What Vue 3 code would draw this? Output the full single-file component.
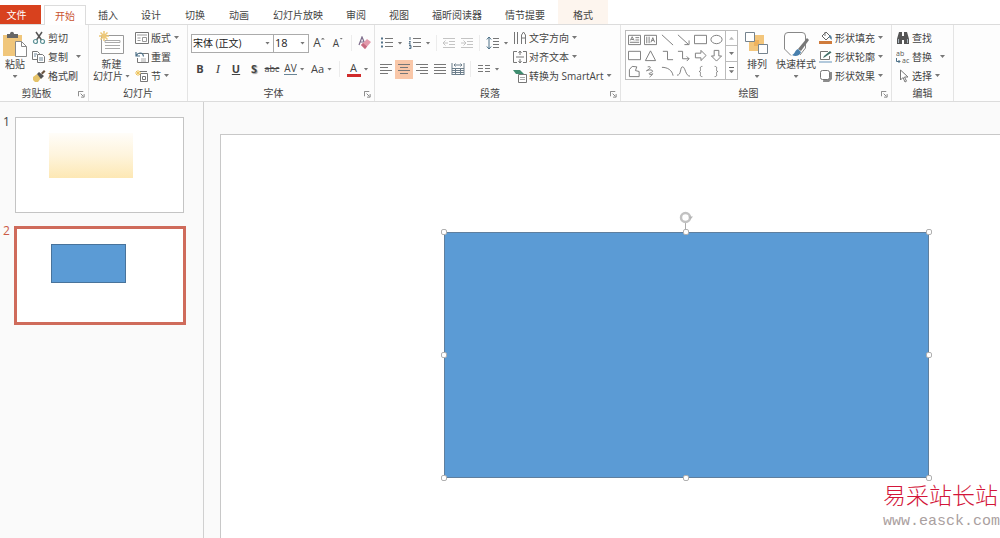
<script setup>
import { ref } from 'vue'

const tabs = ['插入', '设计', '切换', '动画', '幻灯片放映', '审阅', '视图', '福昕阅读器', '情节提要']
const font = ref('宋体 (正文)')
const size = ref('18')

const k = 'fill="none" stroke="#777" stroke-width="1"'
const lines = (rows) => rows.map(([a, b], i) => `<path d="M${a} ${2.5 + i * 3}H${b}" ${k}/>`).join('')

const icons = {
  cut: `<path d="M4 1L9.500 9M10 1L4.500 9" fill="none" stroke="#555" stroke-width="1.500"/><circle cx="3.500" cy="10.500" r="2" fill="none" stroke="#5d9296" stroke-width="1.200"/><circle cx="10.500" cy="10.500" r="2" fill="none" stroke="#5d9296" stroke-width="1.200"/>`,
  copy: `<path d="M.5 1.500h5l2 2v6h-7z" fill="#fff" stroke="#777"/><path d="M5.500 4.500h5l2 2v6h-7z" fill="#fff" stroke="#777"/><path d="M2 4h3M2 6h2M7 8h4M7 10h4" stroke="#6d8799"/>`,
  brush: `<path d="M1 8l4-3 4 4-3 4H3l-2-2z" fill="#e5c36a"/><path d="M5 5l2-2 5 4-3 3z" fill="#555"/><path d="M9 4l3-3 1.500 1.500-3 3z" fill="#6b5540"/>`,
  layout: `<path d="M.5 1.500h13v11H.5z" fill="#fff" stroke="#777"/><path d="M2 4h10M2.500 7h3M2.500 9.500h3M7.500 6.500h4v4h-4z" fill="none" stroke="#999"/>`,
  reset: `<path d="M3.500 3.500h10v9h-11V8" fill="#fff" stroke="#777"/><path d="M1 2v4h4M1.500 5.500C3 2 8 2 8.500 6.500" fill="none" stroke="#4d7188" stroke-width="1.200"/><path d="M6 9h5M6 11h5" fill="none" stroke="#aaa"/>`,
  section: `<path d="M5.500 4.500h7v8h-7zM4 2.500h8" fill="#fff" stroke="#777"/><path d="M7.500 7.500h3v3h-3z" ${k}/><path d="M3 1v6M0 4h6M1 2l4 4M5 2L1 6" stroke="#edc35c"/>`,
  bullets: `<path d="M5 2.500h8M5 6.500h8M5 10.500h8" ${k}/><path d="M1 1.500h2v2H1zM1 5.500h2v2H1zM1 9.500h2v2H1z" fill="#54738a"/>`,
  numbers: `<path d="M5 2.500h8M5 6.500h8M5 10.500h8" ${k}/><path d="M2 1v3M1 5.500h1.500L1 8h2M1 9.500h2v3H1M1.500 11H3" fill="none" stroke="#54738a"/>`,
  outdent: `<path d="M1 2.500h12M7 5.500h6M7 8.500h6M1 11.500h12M6 7H1M3.500 4.500L1 7l2.500 2.500" fill="none" stroke="#c4c4c4"/>`,
  indent: `<path d="M1 2.500h12M7 5.500h6M7 8.500h6M1 11.500h12M1 7h5M3.500 4.500L6 7 3.500 9.500" fill="none" stroke="#c4c4c4"/>`,
  spacing: `<path d="M7 2.500h6M7 5.500h6M7 8.500h6M7 11.500h6" ${k}/><path d="M3 1v12M.8 3.500L3 1l2.200 2.500M.8 10.500L3 13l2.200-2.500" fill="none" stroke="#4d7188"/>`,
  left: lines([[1, 13], [1, 9], [1, 13], [1, 9]]),
  center: lines([[1, 13], [3, 11], [1, 13], [3, 11]]),
  right: lines([[1, 13], [5, 13], [1, 13], [5, 13]]),
  justify: lines([[1, 13], [1, 13], [1, 13], [1, 13]]),
  spread: `<path d="M1 1v12M13 1v12M3 3h8M4.500 1.500L3 3l1.500 1.500M9.500 1.500L11 3 9.500 4.500M1 6.500h12M1 8.500h12M1 10.500h12M1 12.500h12M4.500 6v7M9.500 6v7" fill="none" stroke="#6c7e8b"/>`,
  columns: `<path d="M1 3.500h5M8 3.500h5M1 6.500h5M8 6.500h5M1 9.500h5M8 9.500h5" ${k}/>`,
  direction: `<path d="M1.500 1v12M4.500 1v12M8.500 13V4l2-3 2 3v9M8.500 7h4" ${k}/>`,
  valign: `<path d="M4 1.500H.5v11H4M10 1.500h3.500v11H10M3 7h8M7 1v4M7 13V9M5.500 3L7 1l1.500 2M5.500 11L7 13l1.500-2" ${k}/>`,
  smart: `<path d="M0 1h7l4 4-3 3-2-3H3z" fill="#3f8d70"/><path d="M5.500 5.500h8v8h-8z" fill="#fff" stroke="#777"/><path d="M7 8.500h5M7 10.500h5" fill="none" stroke="#aaa"/>`,
  fill: `<path d="M3 5l4-4 4 4-4 4z" fill="#fff" stroke="#666"/><path d="M6 1v4" ${k}/><path d="M11 4c2 1 2 3 1.500 5L10 6z" fill="#4f7d9c"/><path d="M0 10h13v3H0z" fill="#cf7b3c"/>`,
  outline: `<path d="M9 1.500H1.500v8h9V6" fill="#fff" stroke="#777"/><path d="M4 8l1-2 6-5 1.500 1.500L6 7z" fill="#3f6f68"/><path d="M0 11h13v2H0z" fill="#b2c9dc"/>`,
  effect: `<path d="M5 3h8v7l-3 3H4z" fill="#8c8c8c"/><rect x="1.500" y="1.500" width="9" height="9" rx="2" fill="#fff" stroke="#777"/>`,
  find: `<path d="M3 1h3v4h2V1h3l2 7v5H8V9H6v4H1V8z" fill="#555"/><path d="M2.500 8v4M11.500 8v4" stroke="#a9b6bf"/>`,
  select: `<path d="M4.500 1v10l2.500-2.500 2 4.500 1.500-.8-2-4.200H12z" fill="#fff" stroke="#777"/>`,
  eraser: `<path d="M1 9l3-8 3 7M2 6h4" fill="none" stroke="#7c6b8a" stroke-width="1.200"/><path d="M3 9l6-6 4 3-6 7z" fill="#e39aab"/><path d="M3 9l2-2 4 3.500L7 13z" fill="#c66b80"/>`,
  paste: `<path d="M1 4h19v21H1z" fill="#f0c67b"/><path d="M5 3h3c0-3 4-3 4 0h4v4H5z" fill="#666"/><path d="M13.500 10.500h6l5 5v10h-11z" fill="#fff" stroke="#888"/><path d="M19.500 10.500v5h5" fill="none" stroke="#888"/>`,
  newSlide: `<path d="M2.500 4.500h22v18h-22z" fill="#fff" stroke="#999"/><path d="M6 9.500h15v2H6zM6 14.500h15M6 17.500h15" fill="none" stroke="#aaa"/><path d="M5 0v10M0 5h10M1.500 1.500l7 7M8.500 1.500l-7 7" stroke="#edc878" stroke-width="1.500"/>`,
  arrange: `<path d="M11 4h9v9h-9z" fill="#f3c67c"/><path d="M5 11h9v9H5z" fill="#f3c67c"/><path d="M10 9h5v6h-5z" fill="#efb25c"/><path d="M1.500 1.500h9v9h-9zM14.500 13.500h9v9h-9z" fill="#fff" stroke="#75838e"/>`,
  quick: `<path d="M8 24.500L1.500 18V5Q1.500 1.500 5 1.500h14q3.500 0 3.500 3.500v12L17 24" fill="#fff" stroke="#888"/><path d="M24 7l2 2-8 11-3-2z" fill="#777"/><path d="M15 18l3 3c-1 4-6 5-9 3 3-1 3-5 6-6z" fill="#477fad"/>`
}

const shapes = [
  `<path d="M.5 2.500h13v10H.5zM8 5h4M8 7.500h4M2 10h10M2.500 8L4.500 4l2 4M3.500 7h2" ${k}/>`,
  `<path d="M.5 2.500h13v10H.5zM3 4v7M5.500 4v7M7.500 10L9.500 5l2 5M8.500 8h2" ${k}/>`,
  `<path d="M1 2l12 11" ${k}/>`,
  `<path d="M1 2l11 10M8 12.500h5V8" ${k}/>`,
  `<path d="M.5 2.500h13v9H.5z" ${k}/>`,
  `<ellipse cx="7" cy="7" rx="6" ry="4.500" ${k}/>`,
  `<path d="M.5 2.500h13v9H.5z" ${k}/>`,
  `<path d="M7 2l5.500 10.500h-11z" ${k}/>`,
  `<path d="M2 2.500h5v9h6" ${k}/>`,
  `<path d="M1 2.500h5v8h7M10.500 8l2.500 2.500-2.500 2.500" ${k}/>`,
  `<path d="M1.500 4.500h6v-3L13 7l-5.500 5.500v-3h-6z" ${k}/>`,
  `<path d="M4.500 1.500h5v6h3L7 13 1.500 7.500h3z" ${k}/>`,
  `<path d="M1.500 12.500V5l3-3.500 5 .5-1.500 4 4 1v5.500z" ${k}/>`,
  `<path d="M4 2c6-1 1 3-1 4s4-2 6 0-6 3-3 4 4-2 3 0-2 2-3 3" ${k}/>`,
  `<path d="M1 2.500c6 0 11 3 12 9" ${k}/>`,
  `<path d="M0 11c5 0 3-9 6-9s3 10 8 10" ${k}/>`,
  `<path d="M9 1.500c-3 0-2 2-2 3.500S6.500 7 5.500 7C6.500 7 7 7.500 7 9s-1 3.500 2 3.500" ${k}/>`,
  `<path d="M5 1.500c3 0 2 2 2 3.500S7.500 7 8.500 7C7.500 7 7 7.500 7 9s1 3.500-2 3.500" ${k}/>`
]

const paragraphRight = [
  ['direction', '文字方向'],
  ['valign', '对齐文本'],
  ['smart', '转换为 SmartArt']
]
const shapeTools = [
  ['fill', '形状填充'],
  ['outline', '形状轮廓'],
  ['effect', '形状效果']
]
const handles = ['nw', 'n', 'ne', 'w', 'e', 'sw', 's', 'se']
</script>

<template>
  <div class="app">
    <nav class="tabs">
      <button class="file">文件</button>
      <button class="tab active">开始</button>
      <button v-for="t in tabs" :key="t" class="tab">{{ t }}</button>
      <button class="tab context">格式</button>
    </nav>

    <header class="ribbon">
      <section class="group clipboard">
        <div class="body">
          <button class="big">
            <svg class="large" viewBox="0 0 26 26" v-html="icons.paste"></svg>
            <span>粘贴</span><i class="caret"></i>
          </button>
          <div class="stack">
            <button class="small"><svg viewBox="0 0 14 14" v-html="icons.cut"></svg>剪切</button>
            <button class="small"><svg viewBox="0 0 14 14" v-html="icons.copy"></svg>复制<i class="caret far"></i></button>
            <button class="small"><svg viewBox="0 0 14 14" v-html="icons.brush"></svg>格式刷</button>
          </div>
        </div>
        <footer><span>剪贴板</span><button class="launcher" aria-label="剪贴板选项"><svg viewBox="0 0 8 8"><path d="M.5 6V.5H6M3 3l3 3M7 3.500V7H3.500" fill="none" stroke="#777" /></svg></button></footer>
      </section>

      <section class="group slides">
        <div class="body">
          <button class="big">
            <svg class="large" viewBox="0 0 26 26" v-html="icons.newSlide"></svg>
            <span>新建</span><span class="line">幻灯片<i class="caret"></i></span>
          </button>
          <div class="stack">
            <button class="small"><svg viewBox="0 0 14 14" v-html="icons.layout"></svg>版式<i class="caret"></i></button>
            <button class="small"><svg viewBox="0 0 14 14" v-html="icons.reset"></svg>重置</button>
            <button class="small"><svg viewBox="0 0 14 14" v-html="icons.section"></svg>节<i class="caret"></i></button>
          </div>
        </div>
        <footer><span>幻灯片</span></footer>
      </section>

      <section class="group fonts">
        <div class="rows">
          <div class="row">
            <div class="combo family">
              <select v-model="font" aria-label="字体"><option>宋体 (正文)</option></select><i class="caret"></i>
            </div>
            <div class="combo size">
              <select v-model="size" aria-label="字号"><option>18</option></select><i class="caret"></i>
            </div>
            <button class="glyph grow" aria-label="增大字号">A<i class="caret up"></i></button>
            <button class="glyph shrink" aria-label="减小字号">A<i class="caret"></i></button>
            <i class="rule"></i>
            <button class="glyph" aria-label="清除格式"><svg viewBox="0 0 14 14" v-html="icons.eraser"></svg></button>
          </div>
          <div class="row formats">
            <button class="glyph"><b>B</b></button>
            <button class="glyph italic">I</button>
            <button class="glyph"><b><u>U</u></b></button>
            <button class="glyph shadow"><b>S</b></button>
            <button class="glyph strike"><s>abc</s></button>
            <button class="glyph drop kern"><span>AV</span><i class="caret"></i></button>
            <button class="glyph drop case">Aa<i class="caret"></i></button>
            <i class="rule"></i>
            <button class="glyph drop color"><span>A</span><i class="caret"></i></button>
          </div>
        </div>
        <footer><span>字体</span><button class="launcher" aria-label="字体选项"><svg viewBox="0 0 8 8"><path d="M.5 6V.5H6M3 3l3 3M7 3.500V7H3.500" fill="none" stroke="#777" /></svg></button></footer>
      </section>

      <section class="group paragraph">
        <div class="body">
          <div class="rows">
            <div class="row lists">
              <button class="icon drop" aria-label="项目符号"><svg viewBox="0 0 14 14" v-html="icons.bullets"></svg><i class="caret"></i></button>
              <button class="icon drop" aria-label="编号"><svg viewBox="0 0 14 14" v-html="icons.numbers"></svg><i class="caret"></i></button>
              <i class="rule"></i>
              <button class="icon" aria-label="降低列表级别"><svg viewBox="0 0 14 14" v-html="icons.outdent"></svg></button>
              <button class="icon" aria-label="提高列表级别"><svg viewBox="0 0 14 14" v-html="icons.indent"></svg></button>
              <i class="rule"></i>
              <button class="icon drop" aria-label="行距"><svg viewBox="0 0 14 14" v-html="icons.spacing"></svg><i class="caret"></i></button>
            </div>
            <div class="row aligns">
              <button class="icon" aria-label="左对齐"><svg viewBox="0 0 14 14" v-html="icons.left"></svg></button>
              <button class="icon on" aria-label="居中"><svg viewBox="0 0 14 14" v-html="icons.center"></svg></button>
              <button class="icon" aria-label="右对齐"><svg viewBox="0 0 14 14" v-html="icons.right"></svg></button>
              <button class="icon" aria-label="两端对齐"><svg viewBox="0 0 14 14" v-html="icons.justify"></svg></button>
              <button class="icon" aria-label="分散对齐"><svg viewBox="0 0 14 14" v-html="icons.spread"></svg></button>
              <i class="rule"></i>
              <button class="icon drop" aria-label="分栏"><svg viewBox="0 0 14 14" v-html="icons.columns"></svg><i class="caret"></i></button>
            </div>
          </div>
          <div class="stack">
            <button v-for="[i, t] in paragraphRight" :key="i" class="small"><svg viewBox="0 0 14 14" v-html="icons[i]"></svg>{{ t }}<i class="caret"></i></button>
          </div>
        </div>
        <footer><span>段落</span><button class="launcher" aria-label="段落选项"><svg viewBox="0 0 8 8"><path d="M.5 6V.5H6M3 3l3 3M7 3.500V7H3.500" fill="none" stroke="#777" /></svg></button></footer>
      </section>

      <section class="group drawing">
        <div class="body">
          <div class="gallery">
            <div class="shapes">
              <button v-for="(s, i) in shapes" :key="i" :aria-label="'形状 ' + (i + 1)"><svg viewBox="0 0 14 14" v-html="s"></svg></button>
            </div>
            <div class="scroll">
              <button aria-label="向上"><i class="caret up faint"></i></button>
              <button aria-label="向下"><i class="caret"></i></button>
              <button class="more" aria-label="其他"><i class="caret"></i></button>
            </div>
          </div>
          <button class="big">
            <svg class="large" viewBox="0 0 26 26" v-html="icons.arrange"></svg>
            <span>排列</span><i class="caret"></i>
          </button>
          <button class="big">
            <svg class="large" viewBox="0 0 26 26" v-html="icons.quick"></svg>
            <span>快速样式</span><i class="caret"></i>
          </button>
          <div class="stack">
            <button v-for="[i, t] in shapeTools" :key="i" class="small"><svg viewBox="0 0 14 14" v-html="icons[i]"></svg>{{ t }}<i class="caret"></i></button>
          </div>
        </div>
        <footer><span>绘图</span><button class="launcher" aria-label="绘图选项"><svg viewBox="0 0 8 8"><path d="M.5 6V.5H6M3 3l3 3M7 3.500V7H3.500" fill="none" stroke="#777" /></svg></button></footer>
      </section>

      <section class="group editing">
        <div class="body">
          <div class="stack">
            <button class="small"><svg viewBox="0 0 14 14" v-html="icons.find"></svg>查找</button>
            <button class="small">
              <svg viewBox="0 0 14 14"><path d="M.5 8v3.500H4M2.500 10L4 11.500 2.500 13" fill="none" stroke="#4d7188" /><text x="0" y="6" font-size="7" fill="#555">ab</text><text x="6" y="13" font-size="7" fill="#555">ac</text></svg>替换<i class="caret far"></i>
            </button>
            <button class="small"><svg viewBox="0 0 14 14" v-html="icons.select"></svg>选择<i class="caret"></i></button>
          </div>
        </div>
        <footer><span>编辑</span></footer>
      </section>
    </header>

    <div class="workspace">
      <aside class="thumbs">
        <button class="thumb"><span>1</span><span class="frame"><i class="shape cream"></i></span></button>
        <button class="thumb current"><span>2</span><span class="frame"><i class="shape blue"></i></span></button>
      </aside>
      <main class="stage">
        <div class="slide">
          <div class="selected">
            <svg class="rotate" viewBox="0 0 14 20"><path d="M6.500 12v8" stroke="#aaa" /><circle cx="6.500" cy="7.500" r="4.500" fill="#fff" stroke="#c2c2c2" stroke-width="2.500" /><path d="M9.500 6.500h4.500l-2.500 3z" fill="#b5b5b5" /></svg>
            <i v-for="h in handles" :key="h" class="handle" :class="h"></i>
          </div>
        </div>
      </main>
      <div class="mark"><strong>易采站长站</strong><span>www.easck.com</span></div>
    </div>
  </div>
</template>

<style>
body { margin: 0; }
</style>

<style scoped>
.app {
  display: flex;
  flex-direction: column;
  min-height: 100vh;
  background: #fff;
  color: #444;
  font: 10px/14px "Open Sans", "Noto Sans CJK SC", sans-serif;
}
.app *, .app *::before, .app *::after { box-sizing: border-box; }
button {
  padding: 0;
  border: 0;
  background: none;
  color: inherit;
  font: inherit;
  white-space: nowrap;
}
svg { display: block; flex: none; width: 14px; height: 14px; }
.caret {
  display: block;
  flex: none;
  width: 5px;
  height: 3px;
  background: #777;
  clip-path: polygon(0 0, 100% 0, 50% 100%);
}
.caret.up { clip-path: polygon(50% 0, 100% 100%, 0 100%); }
.caret.faint { background: #bbb; }
.rule { width: 1px; height: 16px; background: #ececec; }

.tabs {
  display: flex;
  height: 25px;
  padding-top: 5px;
  border-bottom: 1px solid #dcdcdc;
}
.file { width: 41px; padding-right: 8px; margin-right: 3px; background: #d8411e; color: #fff; }
.tab { padding: 0 12px 0 11px; }
.tab:nth-child(n + 5):nth-child(-n + 7) { padding-left: 12px; }
.tab.active {
  height: 20px;
  padding: 0 10px;
  margin-right: 1px;
  border: 1px solid #dcdcdc;
  border-bottom: 0;
  background: #fff;
  color: #c9532f;
}
.tab.context { height: 24px; padding: 5px 15px 0; margin: -5px 0 0 1px; background: #fdf5ee; }

.ribbon {
  display: flex;
  min-height: 77px;
  border-bottom: 1px solid #dcdcdc;
  background: #fdfdfd;
}
.group {
  display: flex;
  flex-direction: column;
  flex: none;
  padding-top: 3px;
  border-right: 1px solid #e4e4e4;
}
.clipboard { width: 89px; }
.slides { width: 99px; }
.fonts { width: 187px; }
.paragraph { width: 246px; }
.drawing { width: 271px; }
.editing { width: 62px; }
.body { display: flex; height: 57px; }
.group footer { display: flex; align-items: center; height: 16px; }
.group footer span { flex: 1; text-align: center; }
.launcher { width: 15px; }
.launcher svg { width: 7px; height: 7px; margin: 3px 0 0 5px; }

.stack { display: flex; flex-direction: column; }
.small { display: flex; align-items: center; gap: 2px; height: 19px; }
.small .caret { margin-left: 1px; }
.small .far { margin-left: 6px; }
.big { display: flex; flex-direction: column; align-items: center; padding-top: 3px; line-height: 12px; }
.big .large { width: 26px; height: 26px; margin-bottom: 1px; }
.big > .caret { margin-top: 5px; }
.line { display: flex; align-items: center; gap: 2px; }
.clipboard .body { padding-left: 2px; gap: 4px; }
.slides .body { padding-left: 4px; gap: 5px; }
.editing .body { padding-left: 4px; }

.rows { display: flex; flex-direction: column; height: 57px; padding-top: 5px; gap: 6px; }
.row { display: flex; align-items: center; height: 20px; }
.combo { display: grid; align-items: center; height: 19px; border: 1px solid #ababab; background: #fff; color: #222; }
.combo > * { grid-area: 1 / 1; }
.combo .caret { justify-self: end; margin-right: 3px; pointer-events: none; }
.combo select { width: 100%; height: 17px; padding: 0 1px; border: 0; appearance: none; background: none; color: inherit; font: inherit; }
.family { width: 83px; }
.size { width: 35px; border-left: 0; }
.size select { font-size: 11px; }
.fonts .rows { padding-left: 3px; }
.glyph { display: flex; justify-content: center; align-items: center; width: 18px; height: 18px; font-size: 11px; }
.grow, .shrink { font-size: 12px; margin-left: 1px; }
.shrink { font-size: 10px; }
.grow .caret, .shrink .caret { width: 4px; height: 2px; margin-bottom: 9px; }
.fonts .rule { margin: 0 4px; }
.formats .glyph { width: 18px; }
.formats .italic { font: italic 13px "Liberation Serif", serif; }
.shadow { text-shadow: 1px 1px 1px #999; }
.formats .strike { font-size: 9px; }
.formats .drop { width: 27px; gap: 3px; }
.kern span { border-bottom: 1px solid #6a8596; line-height: 11px; font-size: 10px; }
.color span { width: 14px; line-height: 12px; border-bottom: 3px solid #d02b2b; }

.icon { display: flex; align-items: center; justify-content: center; width: 18px; height: 19px; }
.icon.drop { width: 28px; gap: 4px; }
.icon.on { background: #f9c7a8; }
.paragraph .rows { width: 138px; padding-left: 2px; }
.paragraph .rule { margin: 0 3px; }

.drawing .body { padding-left: 4px; gap: 6px; }
.gallery { display: flex; width: 113px; height: 50px; margin-top: 2px; border: 1px solid #bbb; background: #fff; }
.shapes { display: grid; grid-template-columns: repeat(6, 1fr); flex: 1; }
.shapes button { display: grid; place-items: center; }
.shapes svg { width: 13px; height: 13px; }
.scroll { display: grid; width: 12px; border-left: 1px solid #bbb; }
.scroll button { display: grid; place-content: center; }
.scroll button + button { border-top: 1px solid #bbb; }
.more::before { content: ""; width: 5px; height: 1px; margin-bottom: 2px; background: #666; }
.drawing .stack { margin-left: -3px; }

.workspace { position: relative; display: flex; flex: 1; background: #fafafa; overflow: hidden; }
.thumbs {
  display: flex;
  flex-direction: column;
  gap: 13px;
  flex: none;
  width: 204px;
  padding: 15px 17px 0 3px;
  border-right: 1px solid #d0d0d0;
}
.thumb { display: flex; gap: 4px; font-size: 12px; line-height: 10px; text-align: left; align-items: flex-start; }
.thumb > span:first-child { width: 8px; }
.frame { display: flex; flex: 1; height: 96px; margin-right: 2px; border: 1px solid #c4c4c4; background: #fff; }
.shape { display: block; }
.cream { width: 84px; height: 45px; margin: 15px 0 0 33px; background: linear-gradient(#fffdf9, #fef4dc 50%, #fde8b4); }
.current { color: #cb5a46; }
.current .frame { height: 99px; margin: 0 0 0 -1px; border: 3px solid #cf6b5b; }
.blue { width: 75px; height: 39px; margin: 15px 0 0 34px; background: #5b9bd5; border: 1px solid #48739b; }

.stage { display: flex; flex: 1; padding: 32px 0 0 16px; }
.slide { position: relative; flex: 1; border: 1px solid #c8c8c8; border-width: 1px 0 0 1px; background: #fff; }
.selected {
  position: absolute;
  left: 223px;
  top: 97px;
  width: 485px;
  height: 246px;
  border: 1px solid #5f7f9e;
  background: #5b9bd5;
}
.handle { position: absolute; width: 6px; height: 6px; border: 1px solid #b0b0b0; border-radius: 2px; background: #fff; }
.nw, .n, .ne { top: -4px; }
.w, .e { top: calc(50% - 3px); }
.sw, .s, .se { bottom: -4px; }
.nw, .w, .sw { left: -4px; }
.n, .s { left: calc(50% - 4px); }
.ne, .e, .se { right: -4px; }
.rotate { position: absolute; left: calc(50% - 8px); top: -23px; width: 14px; height: 20px; }

.mark { position: absolute; right: 0; bottom: 6px; display: flex; flex-direction: column; width: 117px; }
.mark strong { color: #d3163a; font: 300 23px/24px "Noto Sans CJK SC", sans-serif; white-space: nowrap; }
.mark span { color: #aaa0a0; font: 15px/20px "Liberation Mono", monospace; margin-top: 6px; }
</style>
